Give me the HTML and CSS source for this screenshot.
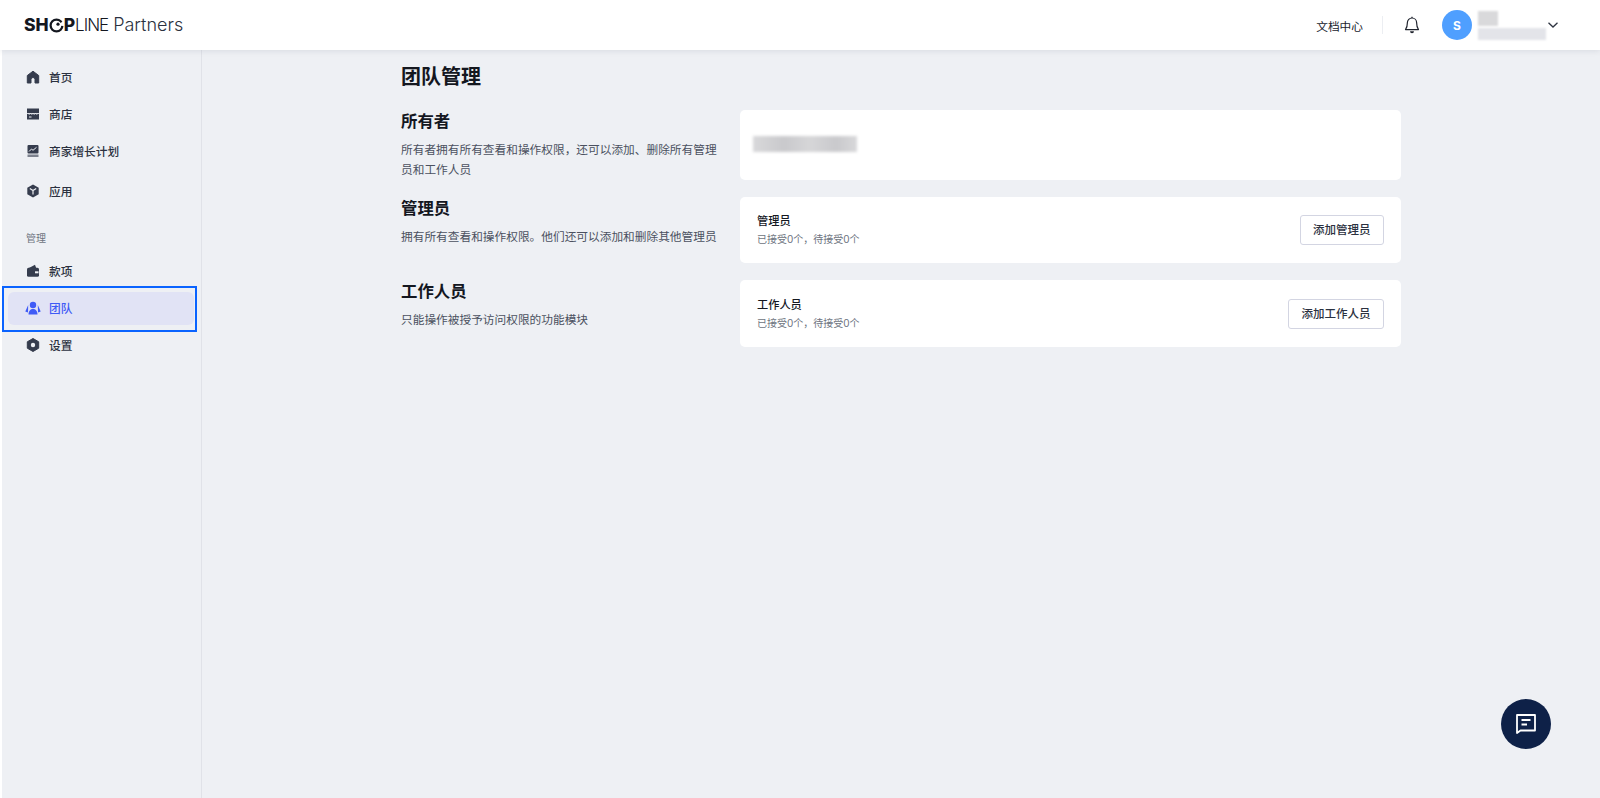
FILE: index.html
```html
<!DOCTYPE html>
<html lang="zh-CN">
<head>
<meta charset="utf-8">
<title>团队管理</title>
<link rel="stylesheet" href="styles.css">
</head>
<body>
<header class="topbar">
  <div class="logo"><b>SH</b><svg class="logo-o" viewBox="0 0 16 16"><circle cx="8" cy="8" r="6.300" fill="none" stroke="#14171f" stroke-width="2.400"/><path d="M8 8 L16 3 L16 8.500Z" fill="#fff"/><circle cx="9.600" cy="6.600" r="1.700" fill="#14171f"/></svg><b>P</b><span class="logo-line">LINE</span><span class="logo-partners">Partners</span></div>
  <div class="top-right">
    <span class="doc">文档中心</span>
    <span class="divider"></span>
    <svg class="bell" viewBox="0 0 16 18"><path d="M8 2a4.600 4.600 0 0 0-4.600 4.600c0 4.200-.9 5.700-1.900 7h13c-1-1.300-1.900-2.800-1.900-7A4.600 4.600 0 0 0 8 2Z" fill="none" stroke="#20242e" stroke-width="1.200" stroke-linejoin="round"/><path d="M6 15.300a2 2 0 0 0 4 0Z" fill="#20242e"/><path d="M8 .8v1.200" stroke="#20242e" stroke-width="1.200"/></svg>
    <span class="avatar">S</span>
    <div class="account">
      <span class="blur blur-name"></span>
      <span class="blur blur-mail"></span>
    </div>
    <svg class="chevron" viewBox="0 0 12 8"><path d="M1.500 1.800 6 6l4.500-4.200" fill="none" stroke="#2f3542" stroke-width="1.300"/></svg>
  </div>
</header>
<div class="shell">
  <nav class="sidebar">
    <a class="item"><svg class="ico" viewBox="0 0 14 14"><path d="M7 1.200 12.700 5.500V13H9V9.500a2 2 0 0 0-4 0V13H1.300V5.500Z" fill="#353c4d" stroke="#353c4d" stroke-linejoin="round"/></svg>首页</a>
    <a class="item"><svg class="ico" viewBox="0 0 14 14"><path d="M1 1.500h12V6H1Z" fill="#353c4d"/><path d="M1 6.800h12v5.700H1Z" fill="#353c4d"/><path d="M2 6.300a1.300 1.300 0 0 0 2.500 0 1.300 1.300 0 0 0 2.500 0 1.300 1.300 0 0 0 2.500 0 1.300 1.300 0 0 0 2.500 0" fill="none" stroke="#eef0f4" stroke-width=".8"/><path d="M3 9.500h2.500v1H3Z" fill="#eef0f4"/></svg>商店</a>
    <a class="item"><svg class="ico" viewBox="0 0 14 14"><rect x="1.500" y="1" width="11" height="8.500" rx="1" fill="#353c4d"/><path d="M3 7.500 5.500 5l1.500 1.300L10.500 3.300" fill="none" stroke="#eef0f4" stroke-width="1"/><rect x="1.500" y="10.500" width="11" height="2.500" fill="#7d828e"/></svg>商家增长计划</a>
    <a class="item item-apps"><svg class="ico" viewBox="0 0 14 14"><path d="M7 .5 12.700 3.800v6.400L7 13.500 1.300 10.200V3.800Z" fill="#353c4d"/><path d="M3.800 4.600 7 6.600l3.200-2M7 6.600v4" fill="none" stroke="#eef0f4" stroke-width="1.200"/></svg>应用</a>
    <div class="group">管理</div>
    <a class="item"><svg class="ico" viewBox="0 0 14 14"><path d="M2 4.500 9 .8l1.200 3.200Z" fill="#353c4d"/><rect x="1" y="3.800" width="12" height="9" rx="1.500" fill="#353c4d"/><path d="M9 7.300h3.500v2H9Z" fill="#eef0f4"/></svg>款项</a>
    <a class="item active"><svg class="ico ico-team" viewBox="0 0 16 14"><circle cx="8" cy="4" r="3.200" fill="#3f5bf6"/><path d="M3.500 13.500c0-3.500 2-5.500 4.500-5.500s4.500 2 4.500 5.500Z" fill="#3f5bf6"/><path d="M3.200 4 .3 10.500 3 11.500ZM12.800 4 15.700 10.500 13 11.500Z" fill="#3f5bf6"/></svg>团队</a>
    <a class="item"><svg class="ico" viewBox="0 0 14 14"><path d="M7 .5 12.700 3.800v6.400L7 13.500 1.300 10.200V3.800Z" fill="#353c4d" stroke="#353c4d" stroke-linejoin="round"/><circle cx="7" cy="7" r="2.200" fill="#eef0f4"/></svg>设置</a>
  </nav>
  <main class="main">
    <div class="content">
      <h1 class="page-title">团队管理</h1>
      <section class="row">
        <div class="intro">
          <h2>所有者</h2>
          <p>所有者拥有所有查看和操作权限，还可以添加、删除所有管理员和工作人员</p>
        </div>
        <div class="card card-owner"><span class="blur blur-owner"></span></div>
      </section>
      <section class="row">
        <div class="intro">
          <h2>管理员</h2>
          <p>拥有所有查看和操作权限。他们还可以添加和删除其他管理员</p>
        </div>
        <div class="card">
          <div class="card-text"><strong>管理员</strong><small>已接受0个，待接受0个</small></div>
          <button class="btn">添加管理员</button>
        </div>
      </section>
      <section class="row">
        <div class="intro">
          <h2>工作人员</h2>
          <p>只能操作被授予访问权限的功能模块</p>
        </div>
        <div class="card card-last">
          <div class="card-text"><strong>工作人员</strong><small>已接受0个，待接受0个</small></div>
          <button class="btn">添加工作人员</button>
        </div>
      </section>
    </div>
  </main>
</div>
<button class="chat" aria-label="chat"><svg viewBox="0 0 22 22" width="22" height="22"><path d="M2 2h18v15.500H5.500L2 20Z" fill="none" stroke="#fff" stroke-width="1.800" stroke-linejoin="round"/><path d="M6.500 7h9M6.500 11.500h5.500" stroke="#fff" stroke-width="1.800"/></svg></button>
</body>
</html>
```
FILE: styles.css
```css
* { box-sizing: border-box; }
html, body { margin: 0; height: 100%; }
body {
  height: 798px;
  overflow: hidden;
  background: #fff;
  color: #14171f;
  font-family: Inter, "Noto Sans CJK SC", sans-serif;
  display: flex;
  flex-direction: column;
}
.topbar {
  height: 50px;
  flex: none;
  background: #fff;
  display: flex;
  align-items: center;
  justify-content: space-between;
  padding: 0 41px 0 24px;
  box-shadow: 0 1px 6px rgba(30, 40, 70, .1);
  position: relative;
  z-index: 2;
}
.logo {
  display: flex;
  align-items: center;
  font-size: 17.500px;
  line-height: 1;
  color: #14171f;
}
.logo b { font-weight: 800; }
.logo-o { width: 15px; height: 15px; }
.logo-line { font-weight: 300; font-size: 17px; letter-spacing: -1px; }
.logo-partners { font-weight: 300; font-size: 18px; margin-left: 5px; color: #2b3140; }
.top-right { display: flex; align-items: center; }
.doc { font-size: 11.700px; color: #20242e; }
.divider { width: 1px; height: 18px; background: #eceef2; margin: 0 21px 0 19px; }
.bell { width: 16px; height: 18px; margin-right: 22px; }
.avatar {
  width: 30px;
  height: 30px;
  border-radius: 50%;
  background: #4f9fff;
  color: #fff;
  font-size: 12px;
  font-weight: 700;
  display: flex;
  align-items: center;
  justify-content: center;
  margin-right: 6px;
}
.account { display: flex; flex-direction: column; gap: 2px; width: 68px; margin-right: 1px; }
.blur { display: block; background: #dcdde1; filter: blur(1px); }
.blur-name { width: 20px; height: 15px; background: #d9d9db; }
.blur-mail { width: 68px; height: 12px; background: #e3e4e9; }
.chevron { width: 12px; height: 8px; }
.shell { flex: 1; display: flex; min-height: 0; padding-left: 2px; background: #fff; }
.sidebar {
  width: 200px;
  flex: none;
  background: #eef0f4;
  border-right: 1px solid #e0e2e8;
  padding: 11px 0 0 6px;
  display: flex;
  flex-direction: column;
}
.item {
  display: flex;
  align-items: center;
  width: 186px;
  height: 33px;
  margin-bottom: 4px;
  padding: 0 0 2px 18px;
  font-size: 11.700px;
  font-weight: 500;
  color: #2b3140;
  border-radius: 6px;
  position: relative;
}
.item-apps { margin-top: 3px; }
.ico { width: 14px; height: 14px; margin-right: 9px; flex: none; }
.ico-team { width: 16px; margin-left: -1px; margin-right: 8px; }
.group {
  font-size: 10px;
  color: #6d7380;
  padding-left: 18px;
  line-height: 14px;
  margin: 19px 0 10px;
}
.active { background: #e1e3f5; color: #3f5bf6; }
.active::after {
  content: "";
  position: absolute;
  inset: -6px -3px -7px -6px;
  border: 2px solid #0a63ff;
}
.main { flex: 1; background: #eef0f4; min-width: 0; padding-left: 199px; }
.content { width: 1000px; }
.page-title {
  margin: 0;
  padding-top: 14px;
  height: 60px;
  font-size: 20px;
  line-height: 26px;
  font-weight: 600;
}
.row { display: grid; grid-template-columns: 339px 661px; margin-bottom: 17px; }
.intro h2 { margin: 0 0 8px; font-size: 16.400px; line-height: 22px; font-weight: 600; }
.intro p { margin: 0; font-size: 11.700px; line-height: 20px; color: #4b5160; max-width: 318px; }
.card {
  background: #fff;
  border-radius: 5px;
  height: 66px;
  display: flex;
  align-items: center;
  justify-content: space-between;
  padding: 0 17px;
}
.card-owner { height: 70px; padding: 0 13px; }
.card-last { height: 67px; }
.blur-owner { width: 104px; height: 16px; margin-bottom: 2px; background: linear-gradient(90deg, #d8d8da, #c9c9cc 30%, #d6d6d8 55%, #c9c9cc 80%, #d8d8da); filter: blur(1.500px); }
.card-text { display: flex; flex-direction: column; }
.card-text strong { font-size: 11.200px; line-height: 18px; font-weight: 500; }
.card-text small { font-size: 10px; line-height: 18px; color: #6d7380; }
.btn {
  height: 30px;
  padding: 0 12.500px 2px;
  background: #fff;
  border: 1px solid #d3d5e2;
  border-radius: 3px;
  font: 500 11.500px Inter, "Noto Sans CJK SC", sans-serif;
  color: #2b3140;
}
.chat {
  position: absolute;
  left: 1501px;
  top: 699px;
  width: 50px;
  height: 50px;
  border-radius: 50%;
  border: 0;
  background: #0e2148;
  display: flex;
  align-items: center;
  justify-content: center;
  padding: 0;
}
```
